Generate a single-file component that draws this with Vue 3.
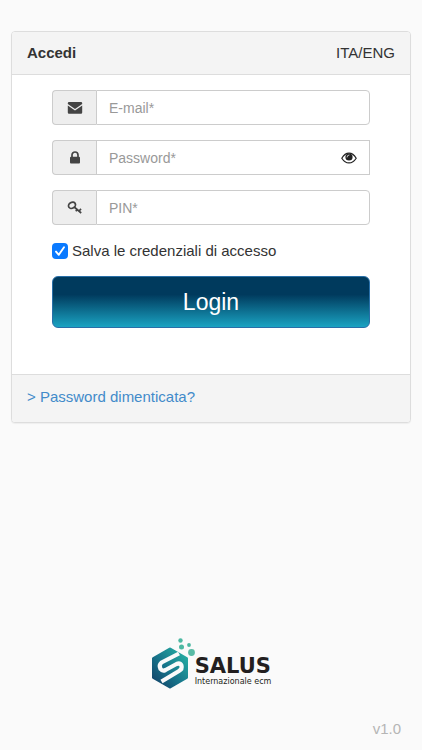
<script setup>
import { ref } from 'vue'

const email = ref('')
const password = ref('')
const pin = ref('')
const remember = ref(true)
const showPassword = ref(false)
</script>

<template>
  <div class="page">
    <main class="panel">
      <header class="panel-head">
        <h1>Accedi</h1>
        <button type="button" class="lang">ITA/ENG</button>
      </header>

      <form class="panel-body" @submit.prevent>
        <div class="field">
          <label class="addon" for="email" aria-label="E-mail">
            <svg width="16" height="14" viewBox="0 0 16 14" aria-hidden="true">
              <path fill="#444" d="M2 1h12q1.200 0 1.200 1.200v.8L8 8 .8 3v-.8Q.8 1 2 1Z" />
              <path fill="#444" d="M.8 4.500 8 9.400l7.200-4.900v7.100q0 1.200-1.200 1.200H2q-1.200 0-1.200-1.200Z" />
            </svg>
          </label>
          <input id="email" v-model="email" type="email" placeholder="E-mail*" />
        </div>

        <div class="field">
          <label class="addon" for="password" aria-label="Password">
            <svg width="12" height="14" viewBox="0 0 12 14" aria-hidden="true">
              <path fill="none" stroke="#444" stroke-width="1.700" d="M3 7V4a3 3 0 0 1 6 0V7" />
              <rect x="1" y="5.800" width="10" height="6.800" rx="1" fill="#444" />
            </svg>
          </label>
          <input
            id="password"
            v-model="password"
            class="with-eye"
            :type="showPassword ? 'text' : 'password'"
            placeholder="Password*"
          />
          <button type="button" class="eye" aria-label="Password" @click="showPassword = !showPassword">
            <svg width="16" height="12" viewBox="0 0 16 12" aria-hidden="true">
              <path fill="#fff" stroke="#222" stroke-width="1.200" d="M.8 6.200Q3.800 1.200 8 1.200t7.200 5Q12.200 10.900 8 10.900T.8 6.200Z" />
              <circle cx="8" cy="5" r="3.600" fill="#222" />
              <path fill="none" stroke="#ddd" stroke-width=".9" stroke-linecap="round" d="M6 5q0-2 2-2" />
            </svg>
          </button>
        </div>

        <div class="field">
          <label class="addon" for="pin" aria-label="PIN">
            <svg width="16" height="14" viewBox="0 0 16 14" aria-hidden="true">
              <g fill="none" stroke="#444">
                <ellipse cx="5" cy="4.300" rx="3.700" ry="2.900" stroke-width="1.700" transform="rotate(-30 5 4.300)" />
                <path stroke-width="1.700" d="m7.200 6 7 6M9.800 8.900l-1 1.300M12.300 9.800l1.700-1.900M11.800 11l1.200-1.400" />
              </g>
            </svg>
          </label>
          <input id="pin" v-model="pin" type="text" placeholder="PIN*" />
        </div>

        <label class="remember">
          <input v-model="remember" type="checkbox" />
          <span class="box" aria-hidden="true">
            <svg v-if="remember" width="16" height="16" viewBox="0 0 16 16">
              <path fill="none" stroke="#fff" stroke-width="1.900" stroke-linecap="round" stroke-linejoin="round" d="m4 8.600 2.800 3.200L12 4.300" />
            </svg>
          </span>
          <span>Salva le credenziali di accesso</span>
        </label>

        <button type="submit" class="login">Login</button>
      </form>

      <footer class="panel-foot">
        <a href="#">&gt; Password dimenticata?</a>
      </footer>
    </main>

    <div class="brand">
      <svg width="44" height="54" viewBox="0 0 44 54" aria-hidden="true">
        <defs>
          <linearGradient id="hex" x1="0" y1="1" x2="1" y2="0">
            <stop offset="0" stop-color="#123e66" />
            <stop offset=".45" stop-color="#17748a" />
            <stop offset="1" stop-color="#27b5a6" />
          </linearGradient>
        </defs>
        <path
          fill="url(#hex)"
          stroke="url(#hex)"
          stroke-width="3"
          stroke-linejoin="round"
          d="M19 13 35.500 22.500V41.500L19 51 2.500 41.500V22.500Z"
        />
        <path
          fill="none"
          stroke="#fafafa"
          stroke-width="4.200"
          stroke-linejoin="round"
          d="M28 17.500 10.500 26.500Q7.500 29 9.500 33Q11.500 35.500 14.500 34L25.500 28Q29 26.500 30.500 29.500Q31.500 33 28 35L10.500 45.500"
        />
        <circle cx="29.500" cy="4.500" r="2.200" fill="#4cb8a2" />
        <circle cx="38" cy="9" r="1.900" fill="#4cb8a2" />
        <circle cx="30.500" cy="11" r="2.500" fill="#4cb8a2" />
        <circle cx="40.500" cy="16.500" r="3.400" fill="#5abba5" />
      </svg>
      <div class="brand-text">
        <span class="brand-name">SALUS</span>
        <span class="brand-sub">Internazionale ecm</span>
      </div>
    </div>

    <p class="version">v1.0</p>
  </div>
</template>

<style>
body {
  background: #fafafa;
}
</style>

<style scoped>
.page,
.page * {
  box-sizing: border-box;
}

.page {
  display: flex;
  flex-direction: column;
  min-height: 100vh;
  padding: 31px 11px 11px;
  font-family: "Liberation Sans", Arial, sans-serif;
  font-size: 15px;
  line-height: 20px;
  color: #333;
}

button,
input {
  font-family: inherit;
}

.panel {
  background: #fff;
  border: 1px solid #ddd;
  border-radius: 4px;
  box-shadow: 0 1px 1px rgba(0, 0, 0, 0.05);
}

.panel-head {
  display: flex;
  justify-content: space-between;
  align-items: center;
  padding: 11px 15px;
  background: #f4f4f4;
  border-bottom: 1px solid #ddd;
  border-radius: 3px 3px 0 0;
}

h1 {
  margin: 0;
  font-size: 15px;
  line-height: 20px;
  font-weight: bold;
}

.lang {
  padding: 0;
  border: 0;
  background: none;
  color: #333;
  font-size: 15px;
  line-height: 20px;
  cursor: pointer;
}

.panel-body {
  display: flex;
  flex-direction: column;
  gap: 15px;
  padding: 15px 40px 46px;
}

.field {
  position: relative;
  display: flex;
  height: 35px;
}

.addon {
  display: flex;
  flex: none;
  align-items: center;
  justify-content: center;
  width: 44px;
  background: #eee;
  border: 1px solid #ccc;
  border-right: 0;
  border-radius: 4px 0 0 4px;
}

.field input {
  flex: 1;
  min-width: 0;
  padding: 0 12px;
  border: 1px solid #ccc;
  border-radius: 0 4px 4px 0;
  background: #fff;
  color: #555;
  font-size: 14px;
  outline: 0;
}

.field input::placeholder {
  color: #999;
  opacity: 1;
}

.field .with-eye {
  padding-right: 40px;
  border-radius: 0;
}

.eye {
  position: absolute;
  top: 0;
  right: 0;
  display: flex;
  align-items: center;
  justify-content: center;
  width: 42px;
  height: 100%;
  padding: 0;
  border: 0;
  background: none;
  cursor: pointer;
}

.remember {
  position: relative;
  display: flex;
  align-items: center;
  gap: 4px;
  height: 21px;
}

.remember input {
  position: absolute;
  width: 16px;
  height: 16px;
  margin: 0;
  opacity: 0;
}

.box {
  display: flex;
  width: 16px;
  height: 16px;
  border-radius: 4px;
  background: #0a7aff;
}

.login {
  height: 52px;
  border: 1px solid #286fa8;
  border-radius: 6px;
  background: linear-gradient(#003a5d 0%, #003a5d 35%, #1aa3c2 100%);
  color: #fff;
  font-size: 23px;
  line-height: 30px;
  cursor: pointer;
}

.panel-foot {
  padding: 12px 15px 15px;
  background: #f4f4f4;
  border-top: 1px solid #ddd;
  border-radius: 0 0 3px 3px;
}

.panel-foot a {
  color: #428bca;
  text-decoration: none;
}

.brand {
  display: flex;
  justify-content: center;
  align-items: flex-end;
  margin-top: auto;
}

.brand-text {
  display: flex;
  flex-direction: column;
  padding-bottom: 4px;
  color: #231f20;
}

.brand-name {
  font-family: "DejaVu Sans", sans-serif;
  font-size: 21px;
  line-height: 24px;
  font-weight: bold;
}

.brand-sub {
  font-family: "DejaVu Sans", sans-serif;
  font-size: 8px;
  line-height: 8px;
}

.version {
  margin: 29px 0 0;
  padding-right: 10px;
  color: #b5b5b5;
  text-align: right;
}
</style>
